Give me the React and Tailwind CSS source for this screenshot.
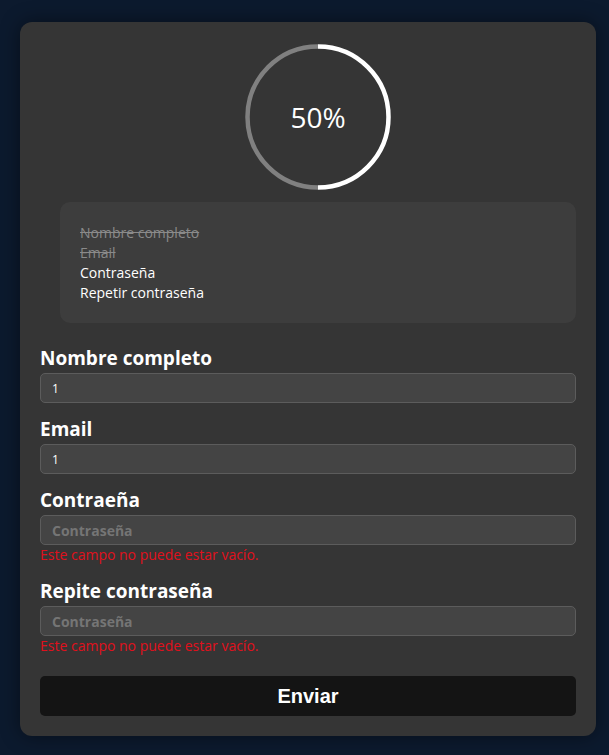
export default function App() {
  const font = { fontFamily: '"Open Sans", "Noto Sans", sans-serif' };
  return (
    <div className="min-h-[755px] w-full bg-[#0c1a2e] pt-[22px] pb-[19px] px-[20px]" style={font}>
      <div className="w-[576px] bg-[#353535] rounded-[12px] px-[20px] pt-[22px] pb-[20px] shadow-[0_0_20px_rgba(0,0,0,0.45)] text-white">
        <div className="ml-[20px] flex justify-center">
          <div className="relative w-[146px] h-[146px]">
            <svg width="146" height="146" viewBox="0 0 146 146">
              <path d="M73 2.5 A70.5 70.5 0 0 0 73 143.5" fill="none" stroke="#808080" strokeWidth="4.5" />
              <path d="M73 2.5 A70.5 70.5 0 0 1 73 143.5" fill="none" stroke="#ffffff" strokeWidth="4.5" />
            </svg>
            <div className="absolute inset-0 flex items-center justify-center text-[28px] leading-none text-white">50%</div>
          </div>
        </div>
        <div className="ml-[20px] mt-[12px] bg-[#3d3d3d] rounded-[10px] pl-[20px] pt-[21px] pb-[20px] text-[14px] leading-[20px]">
          <div className="line-through text-[#8a8a8a]">Nombre completo</div>
          <div className="line-through text-[#8a8a8a]">Email</div>
          <div>Contraseña</div>
          <div>Repetir contraseña</div>
        </div>
        <div className="mt-[22px] flex flex-col">
          <label className="text-[19px] font-bold leading-[26px]">Nombre completo</label>
          <input readOnly value="1" className="mt-[2px] h-[30px] bg-[#444444] border border-[#5c5c5c] rounded-[5px] px-[11px] text-[12px] text-white outline-none" />
          <label className="mt-[13px] text-[19px] font-bold leading-[26px]">Email</label>
          <input readOnly value="1" className="mt-[2px] h-[30px] bg-[#444444] border border-[#5c5c5c] rounded-[5px] px-[11px] text-[12px] text-white outline-none" />
          <label className="mt-[13px] text-[19px] font-bold leading-[26px]">Contraeña</label>
          <input readOnly placeholder="Contraseña" className="mt-[2px] h-[30px] bg-[#444444] border border-[#5c5c5c] rounded-[5px] px-[11px] text-[14px] font-bold text-white placeholder:text-[#757575] outline-none" />
          <div className="text-[14px] leading-[20px] text-[#e0101c]">Este campo no puede estar vacío.</div>
          <label className="mt-[13px] text-[19px] font-bold leading-[26px]">Repite contraseña</label>
          <input readOnly placeholder="Contraseña" className="mt-[2px] h-[30px] bg-[#444444] border border-[#5c5c5c] rounded-[5px] px-[11px] text-[14px] font-bold text-white placeholder:text-[#757575] outline-none" />
          <div className="text-[14px] leading-[20px] text-[#e0101c]">Este campo no puede estar vacío.</div>
          <button className="mt-[20px] h-[40px] bg-[#141414] rounded-[5px] text-[20px] font-bold text-white" style={{ fontFamily: '"Liberation Sans", Arial, sans-serif' }}>Enviar</button>
        </div>
      </div>
    </div>
  );
}
